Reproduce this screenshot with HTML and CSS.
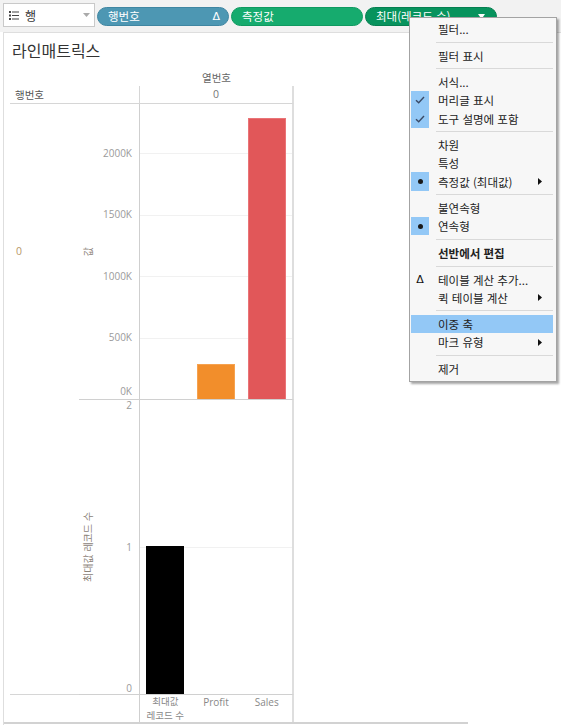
FILE: index.html
```html
<!DOCTYPE html>
<html lang="ko">
<head>
<meta charset="utf-8">
<link rel="stylesheet" href="styles.css">
</head>
<body>
<div class="toolbar">
  <div class="shelf-label">
    <svg class="list-icon" width="10" height="9" viewBox="0 0 10 9"><rect x="0" y="0" width="2" height="2" fill="#444"/><rect x="3" y="0.5" width="7" height="1" fill="#444"/><rect x="0" y="3.5" width="2" height="2" fill="#444"/><rect x="3" y="4" width="7" height="1" fill="#444"/><rect x="0" y="7" width="2" height="2" fill="#444"/><rect x="3" y="7.5" width="7" height="1" fill="#444"/></svg>
    <span class="shelf-name">행</span>
    <svg class="shelf-caret" width="7" height="4" viewBox="0 0 7 4"><path d="M0 0H7L3.5 4Z" fill="#aaa"/></svg>
  </div>
  <div class="pills">
    <div class="pill pill-blue"><span>행번호</span><span class="pill-delta">Δ</span></div>
    <div class="pill pill-green"><span>측정값</span></div>
    <div class="pill pill-dkgreen"><span>최대(레코드 수)</span><svg class="pill-caret" width="7" height="5" viewBox="0 0 7 5"><path d="M0 0H7L3.5 5Z" fill="#fff"/></svg></div>
  </div>
</div>

<div class="sheet">
  <h1 class="title">라인매트릭스</h1>
  <div class="viz">
    <div class="col-title">열번호</div>

    <div class="hdr hdr-row">행번호</div>
    <div class="hdr hdr-col">0</div>

    <div class="row-head">0</div>
    <div class="axis axis1">
      <div class="axis-title"><span>값</span></div>
      <div class="ticks ticks1">
        <div class="tick">2000K</div>
        <div class="tick">1500K</div>
        <div class="tick">1000K</div>
        <div class="tick">500K</div>
        <div class="tick tick-zero">0K</div>
      </div>
    </div>
    <div class="pane pane1">
      <div class="gridlines">
        <div class="gl"></div><div class="gl"></div><div class="gl"></div><div class="gl"></div>
      </div>
      <div class="bars">
        <div class="slot"></div>
        <div class="slot"><div class="bar bar-orange" style="height:35px"></div></div>
        <div class="slot"><div class="bar bar-red" style="height:281px"></div></div>
      </div>
    </div>

    <div class="row-head2"></div>
    <div class="axis axis2">
      <div class="axis-title"><span>최대값 레코드 수</span></div>
      <div class="ticks ticks2">
        <div class="tick2">2</div>
        <div class="tick2">1</div>
        <div class="tick2">0</div>
      </div>
    </div>
    <div class="pane pane2">
      <div class="gridlines2"><div class="gl2"></div></div>
      <div class="bars">
        <div class="slot"><div class="bar bar-black" style="height:148px"></div></div>
        <div class="slot"></div>
        <div class="slot"></div>
      </div>
    </div>

    <div class="xlabels">
      <div class="xl xl-2"><div>최대값</div><div>레코드 수</div></div>
      <div class="xl">Profit</div>
      <div class="xl">Sales</div>
    </div>
  </div>
  <div class="hscroll"></div>
</div>

<div class="menu">
  <div class="mi"><span class="mi-icon"></span><span class="mi-text">필터...</span></div>
  <div class="sep"></div>
  <div class="mi"><span class="mi-icon"></span><span class="mi-text">필터 표시</span></div>
  <div class="sep"></div>
  <div class="mi"><span class="mi-icon"></span><span class="mi-text">서식...</span></div>
  <div class="mi"><span class="mi-icon on"><svg width="10" height="8" viewBox="0 0 10 8"><path d="M1 4.2L3.7 6.8L9 1" fill="none" stroke="#3a4a66" stroke-width="1.4"/></svg></span><span class="mi-text">머리글 표시</span></div>
  <div class="mi"><span class="mi-icon on"><svg width="10" height="8" viewBox="0 0 10 8"><path d="M1 4.2L3.7 6.8L9 1" fill="none" stroke="#3a4a66" stroke-width="1.4"/></svg></span><span class="mi-text">도구 설명에 포함</span></div>
  <div class="sep"></div>
  <div class="mi"><span class="mi-icon"></span><span class="mi-text">차원</span></div>
  <div class="mi"><span class="mi-icon"></span><span class="mi-text">특성</span></div>
  <div class="mi"><span class="mi-icon on"><span class="dot"></span></span><span class="mi-text">측정값 (최대값)</span><svg class="sub" width="4" height="7" viewBox="0 0 4 7"><path d="M0 0L4 3.5L0 7Z" fill="#111"/></svg></div>
  <div class="sep"></div>
  <div class="mi"><span class="mi-icon"></span><span class="mi-text">불연속형</span></div>
  <div class="mi"><span class="mi-icon on"><span class="dot"></span></span><span class="mi-text">연속형</span></div>
  <div class="sep"></div>
  <div class="mi"><span class="mi-icon"></span><span class="mi-text bold">선반에서 편집</span></div>
  <div class="sep"></div>
  <div class="mi"><span class="mi-icon delta">Δ</span><span class="mi-text">테이블 계산 추가...</span></div>
  <div class="mi"><span class="mi-icon"></span><span class="mi-text">퀵 테이블 계산</span><svg class="sub" width="4" height="7" viewBox="0 0 4 7"><path d="M0 0L4 3.5L0 7Z" fill="#111"/></svg></div>
  <div class="sep"></div>
  <div class="mi hl"><span class="mi-icon"></span><span class="mi-text">이중 축</span></div>
  <div class="mi"><span class="mi-icon"></span><span class="mi-text">마크 유형</span><svg class="sub" width="4" height="7" viewBox="0 0 4 7"><path d="M0 0L4 3.5L0 7Z" fill="#111"/></svg></div>
  <div class="sep"></div>
  <div class="mi"><span class="mi-icon"></span><span class="mi-text">제거</span></div>
</div>
</body>
</html>
```

FILE: styles.css
```css
* { box-sizing: border-box; }
html, body { margin: 0; padding: 0; background: #fff; }
body {
  width: 561px;
  height: 725px;
  overflow: hidden;
  position: relative;
  font-family: "Open Sans", "Noto Sans CJK KR", sans-serif;
  color: #333;
}

/* ---------- toolbar ---------- */
.toolbar {
  height: 32px;
  background: #f2f2f2;
  display: flex;
  align-items: flex-start;
  padding: 3px 0 0 3px;
}
.shelf-label {
  width: 92px;
  height: 24px;
  background: #fff;
  border: 1px solid #c9c9c9;
  display: flex;
  align-items: center;
  padding-left: 5px;
}
.list-icon { display: block; }
.shelf-name {
  margin-left: 6px;
  font-family: "Noto Sans CJK KR", sans-serif;
  font-size: 12px;
  color: #333;
}
.shelf-caret { margin-left: auto; margin-right: 4px; }
.pills {
  display: flex;
  gap: 2px;
  margin-left: 2px;
  margin-top: 4px;
}
.pill {
  width: 132px;
  height: 19px;
  border-radius: 10px;
  display: flex;
  align-items: center;
  padding: 0 10px;
  color: #fff;
  font-family: "Noto Sans CJK KR", sans-serif;
  font-size: 11.5px;
  line-height: 17px;
}
.pill-blue { background: #4d97b3; border: 1px solid #3f86a2; }
.pill-green { background: #16ab6e; border: 1px solid #0f9a60; }
.pill-dkgreen { background: #07935d; border: 1px solid #057f50; }
.pill-delta { margin-left: auto; margin-right: -2px; font-family: "DejaVu Sans", sans-serif; font-size: 11px; }
.pill-caret { margin-left: auto; margin-right: 1px; }

/* ---------- sheet ---------- */
.sheet {
  margin-left: 3px;
  border-top: 1px solid #dedede;
  border-left: 1px solid #dedede;
  height: 693px;
}
.title {
  margin: 0 0 10px 0;
  padding: 7px 0 0 8px;
  font-family: "Noto Sans CJK KR", sans-serif;
  font-weight: 400;
  font-size: 16px;
  line-height: 20px;
  color: #333;
}
.viz {
  margin-left: 6px;
  display: grid;
  grid-template-columns: 69px 60px 155px;
  grid-template-rows: 16px 18px 296px 295px 27px;
  font-size: 11px;
  color: #666;
}
.col-title {
  grid-column: 3;
  grid-row: 1;
  text-align: center;
  font-family: "Noto Sans CJK KR", sans-serif;
  font-size: 10.5px;
  line-height: 16px;
  color: #666;
}
.hdr {
  grid-row: 2;
  border-bottom: 1px solid #d6d6d6;
  font-size: 10.5px;
  line-height: 17px;
  color: #555;
}
.hdr-row {
  grid-column: 1 / 3;
  padding-left: 5px;
  font-family: "Noto Sans CJK KR", sans-serif;
}
.hdr-col {
  grid-column: 3;
  text-align: center;
  border-left: 1px solid #d6d6d6;
  border-right: 2px solid #dedede;
  color: #777;
}
.row-head {
  grid-column: 1;
  grid-row: 3;
  display: flex;
  align-items: center;
  padding-left: 6px;
  padding-bottom: 3px;
  font-size: 10.5px;
  color: #b8986a;
}
.row-head2 {
  grid-column: 1;
  grid-row: 4;
  border-bottom: 1px solid #d6d6d6;
}
.axis {
  grid-column: 2;
  display: flex;
  border-bottom: 1px solid #d0d0d0;
}
.axis1 { grid-row: 3; }
.axis2 { grid-row: 4; }
.axis-title {
  width: 18px;
  display: flex;
  align-items: center;
  justify-content: center;
}
.axis-title span {
  writing-mode: vertical-rl;
  text-orientation: sideways;
  transform: rotate(180deg);
  font-family: "Noto Sans CJK KR", sans-serif;
  font-size: 10px;
  line-height: 12px;
  color: #8b8278;
  white-space: nowrap;
}
.ticks {
  flex: 1;
  display: flex;
  flex-direction: column;
  padding-right: 7px;
  text-align: right;
  font-size: 10px;
  color: #9a9a9a;
}
.ticks1 { justify-content: flex-end; }
.tick {
  height: 61.5px;
  line-height: 61.5px;
}
.tick-zero {
  height: 30.5px;
  line-height: 14px;
  display: flex;
  align-items: flex-end;
  justify-content: flex-end;
  padding-bottom: 1px;
}
.ticks2 { justify-content: space-between; }
.tick2 { line-height: 11px; }

.pane {
  grid-column: 3;
  border-left: 1px solid #cfcfcf;
  border-right: 2px solid #dedede;
  border-bottom: 1px solid #d0d0d0;
  display: grid;
}
.pane1 { grid-row: 3; }
.pane2 { grid-row: 4; }
.gridlines, .gridlines2, .bars { grid-area: 1 / 1; }
.gridlines {
  display: flex;
  flex-direction: column;
  justify-content: flex-end;
}
.gl {
  height: 61.5px;
  border-top: 1px solid #f1f1f1;
  flex: none;
}
.gridlines2 {
  display: flex;
  flex-direction: column;
  justify-content: flex-end;
}
.gl2 {
  height: 50%;
  border-top: 1px solid #f1f1f1;
}
.bars {
  display: flex;
  align-items: flex-end;
  position: relative;
}
.slot {
  flex: 1;
  display: flex;
  justify-content: center;
  align-items: flex-end;
}
.bar { width: 38px; }
.bar-orange { background: #f28e2b; border: 1px solid #f6a24f; border-bottom: none; }
.bar-red { background: #e15759; border: 1px solid #ea7477; border-bottom: none; }
.bar-black { background: #000; }

.xlabels {
  grid-column: 3;
  grid-row: 5;
  border-left: 1px solid #cfcfcf;
  border-right: 2px solid #dedede;
  display: flex;
  padding-top: 1px;
}
.xl {
  flex: 1;
  text-align: center;
  font-size: 10px;
  line-height: 12px;
  color: #888;
}
.xl-2 { padding-top: 0; margin-top: -1px; }
.xl-2 div {
  font-size: 9.5px;
  line-height: 13.8px;
  height: 13.8px;
  white-space: nowrap;
}
.hscroll {
  width: 464px;
  height: 2px;
  background: #d2d2d2;
}

/* ---------- context menu ---------- */
.menu {
  position: absolute;
  left: 409px;
  top: 17px;
  width: 148px;
  background: #f7f7f7;
  border: 1px solid #a3a3a3;
  box-shadow: 2px 2px 2px rgba(0,0,0,0.35);
  padding: 2px 3px 3px 1px;
  font-family: "Noto Sans CJK KR", sans-serif;
  font-size: 11.5px;
  color: #222;
}
.mi {
  height: 18.2px;
  display: flex;
  align-items: center;
  overflow: hidden;
}
.mi.hl { background: #93c8f6; }
.mi-icon {
  width: 18px;
  height: 100%;
  flex: none;
  display: flex;
  align-items: center;
  justify-content: center;
}
.mi-icon.on { background: #93c8f6; }
.mi-icon.delta {
  font-family: "DejaVu Sans", sans-serif;
  font-size: 11px;
  color: #111;
}
.dot {
  width: 5px;
  height: 5px;
  border-radius: 50%;
  background: #1a1a1a;
}
.mi-text {
  margin-left: 9px;
  white-space: nowrap;
  line-height: 18px;
}
.mi-text.bold { font-weight: 700; }
.sub { margin-left: auto; margin-right: 11px; }
.sep {
  height: 8.4px;
  margin-left: 25px;
  display: flex;
  align-items: center;
}
.sep::before {
  content: "";
  flex: 1;
  height: 1px;
  background: #d9d9d9;
}
```
